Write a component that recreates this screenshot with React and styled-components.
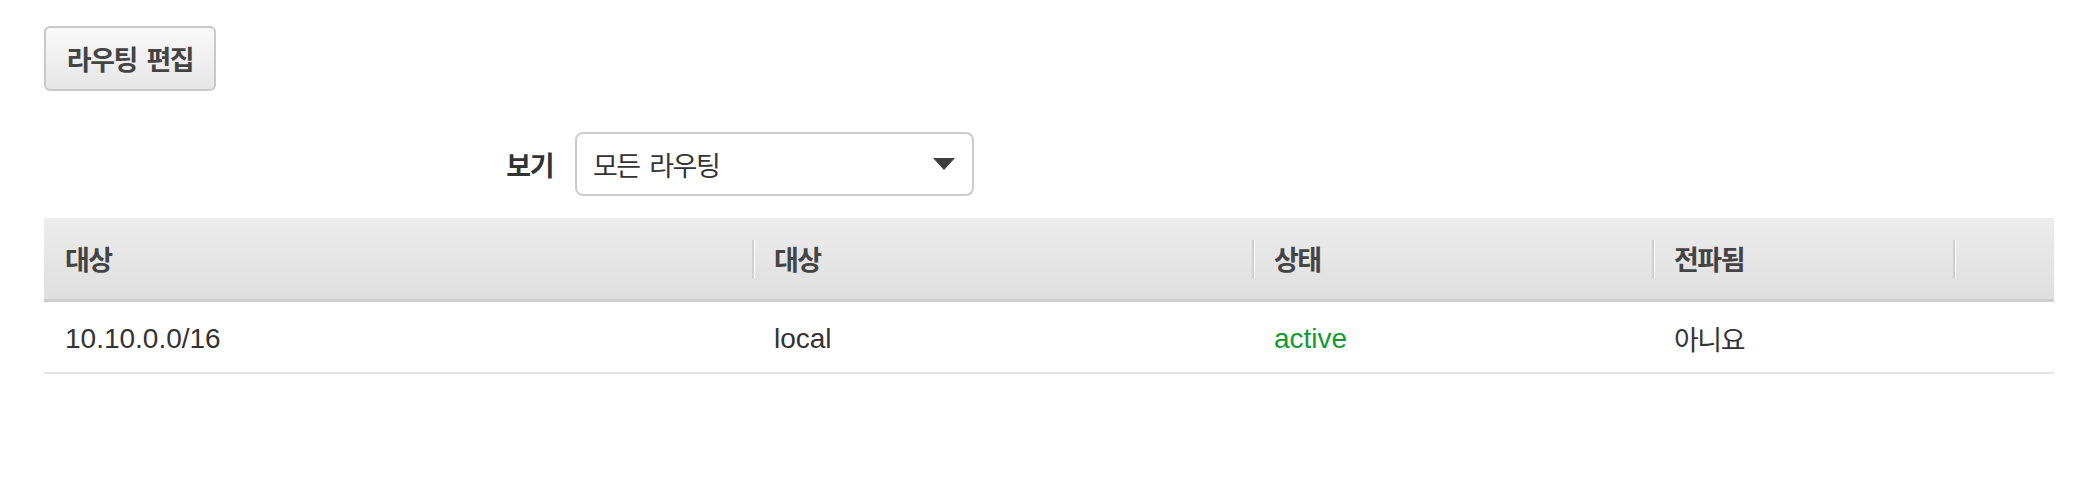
import React from "react";
import styled, { createGlobalStyle } from "styled-components";

const GlobalStyle = createGlobalStyle`
  html, body { margin: 0; padding: 0; background: #ffffff; }
  body {
    font-family: "Liberation Sans", "Noto Sans CJK KR", Arial, sans-serif;
    color: #333333;
  }
  * { box-sizing: border-box; }
`;

const Page = styled.div`
  padding: 26px 32px 0 44px;
  width: 2086px;
`;

const Korean = styled.span`
  font-family: "Noto Sans CJK KR", "Liberation Sans", sans-serif;
  font-size: 27px;
  letter-spacing: -1.5px;
  word-spacing: 5px;
  font-weight: ${(p) => (p.$bold ? 700 : 400)};
`;

const EditButton = styled.button`
  display: inline-flex;
  align-items: center;
  justify-content: center;
  height: 65px;
  width: 172px;
  padding: 0 18px;
  border: 2px solid #c8c8c8;
  border-radius: 6px;
  background: linear-gradient(#f9f9f9, #e6e6e6);
  color: #444444;
  cursor: pointer;
`;

const FilterRow = styled.div`
  display: flex;
  align-items: center;
  margin-top: 41px;
  height: 64px;
`;

const FilterLabel = styled.label`
  width: 509px;
  text-align: right;
  color: #333333;
`;

const SelectBox = styled.div`
  margin-left: 22px;
  width: 399px;
  height: 64px;
  border: 2px solid #cccccc;
  border-radius: 8px;
  background: #ffffff;
  display: flex;
  align-items: center;
  justify-content: space-between;
  padding: 0 17px 0 16px;
  color: #333333;
`;

const Table = styled.div`
  margin-top: 22px;
  width: 2010px;
  display: grid;
  grid-template-columns: 709px 500px 400px 301px 1fr;
`;

const HeadCell = styled.div`
  position: relative;
  height: 84px;
  display: flex;
  align-items: center;
  padding-left: 21px;
  background: linear-gradient(#ececec, #dfdfdf);
  border-bottom: 3px solid #cccccc;
  color: #444444;

  ${(p) =>
    p.$sep &&
    `
    &::before {
      content: "";
      position: absolute;
      left: -1px;
      top: 22px;
      height: 38px;
      width: 2px;
      background: #cfcfcf;
      box-shadow: 1px 0 0 #ffffff;
    }
  `}
`;

const BodyCell = styled.div`
  height: 72px;
  display: flex;
  align-items: center;
  padding: 3px 0 0 21px;
  border-bottom: 2px solid #e3e3e3;
  font-size: 28px;
  color: ${(p) => (p.$tone === "success" ? "#119a33" : "#333333")};
`;

const Caret = () => (
  <svg width="22" height="12" viewBox="0 0 22 12">
    <polygon points="0,0 22,0 11,12" fill="#3d3d3d" />
  </svg>
);

const headers = ["대상", "대상", "상태", "전파됨", ""];

export default function App() {
  return (
    <>
      <GlobalStyle />
      <Page>
        <EditButton>
          <Korean $bold>라우팅 편집</Korean>
        </EditButton>

        <FilterRow>
          <FilterLabel>
            <Korean $bold>보기</Korean>
          </FilterLabel>
          <SelectBox role="button">
            <Korean>모든 라우팅</Korean>
            <Caret />
          </SelectBox>
        </FilterRow>

        <Table>
          {headers.map((h, i) => (
            <HeadCell key={i} $sep={i > 0}>
              {h && <Korean $bold>{h}</Korean>}
            </HeadCell>
          ))}
          <BodyCell>10.10.0.0/16</BodyCell>
          <BodyCell>local</BodyCell>
          <BodyCell $tone="success">active</BodyCell>
          <BodyCell>
            <Korean>아니요</Korean>
          </BodyCell>
          <BodyCell />
        </Table>
      </Page>
    </>
  );
}
